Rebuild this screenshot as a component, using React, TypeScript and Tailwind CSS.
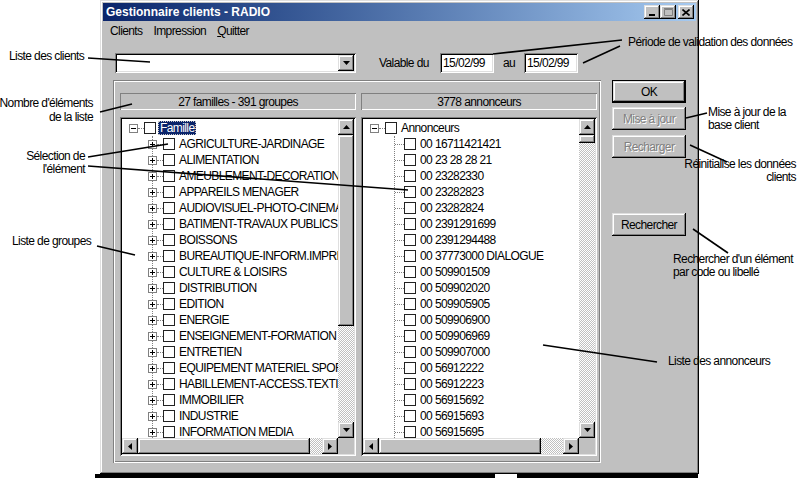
import React from 'react';

const RAISED =
  'bg-[#c0c0c0] shadow-[inset_-1px_-1px_#000,inset_1px_1px_#dfdfdf,inset_-2px_-2px_#808080,inset_2px_2px_#fff]';
const SUNKEN =
  'shadow-[inset_1px_1px_#808080,inset_-1px_-1px_#fff,inset_2px_2px_#000,inset_-2px_-2px_#dfdfdf]';
const ETCHED =
  'shadow-[inset_1px_1px_#808080,inset_-1px_-1px_#fff,inset_2px_2px_#fff,inset_-2px_-2px_#808080]';
const CHECKER =
  'bg-[image:repeating-conic-gradient(#c0c0c0_0_25%,#fff_0_50%)] bg-[length:2px_2px]';
const DISABLED = 'text-[#808080] [text-shadow:1px_1px_0_#fff]';

type Dir = 'up' | 'down' | 'left' | 'right';

const Tri = ({ dir }: { dir: Dir }) => {
  const vertical = dir === 'up' || dir === 'down';
  const d = {
    up: 'M3.5 0L7 4H0z',
    down: 'M0 0h7L3.5 4z',
    left: 'M4 0v7L0 3.5z',
    right: 'M0 0l4 3.5L0 7z',
  }[dir];
  return (
    <svg width={vertical ? 7 : 4} height={vertical ? 4 : 7} viewBox={vertical ? '0 0 7 4' : '0 0 4 7'}>
      <path d={d} fill="#000" />
    </svg>
  );
};

const ScrollBtn = ({ dir }: { dir: Dir }) => (
  <div className={`flex h-4 w-4 shrink-0 items-center justify-center ${RAISED}`}>
    <Tri dir={dir} />
  </div>
);

const VScroll = ({ thumb }: { thumb: string }) => (
  <div className="flex h-full w-4 flex-col">
    <ScrollBtn dir="up" />
    <div className={`w-4 shrink-0 ${RAISED} ${thumb}`} />
    <div className={`flex-1 ${CHECKER}`} />
    <ScrollBtn dir="down" />
  </div>
);

const HScroll = ({ thumb }: { thumb: string }) => (
  <div className="flex h-4 w-full">
    <ScrollBtn dir="left" />
    <div className={`h-4 shrink-0 ${RAISED} ${thumb}`} />
    <div className={`flex-1 ${CHECKER}`} />
    <ScrollBtn dir="right" />
  </div>
);

const Expander = ({ open }: { open?: boolean }) => (
  <span className="flex h-[9px] w-[9px] shrink-0 items-center justify-center border border-[#808080] bg-white">
    <svg width="7" height="7" viewBox="0 0 7 7">
      <path d={open ? 'M1 3.5h5' : 'M1 3.5h5M3.5 1v5'} stroke="#000" strokeWidth="1" />
    </svg>
  </span>
);

const Check = () => <span className="h-3 w-3 shrink-0 border border-[#222] bg-white" />;

const Dots = ({ w }: { w: string }) => (
  <span className={`shrink-0 border-t border-dotted border-[#808080] ${w}`} />
);

const TreePane = ({
  title,
  vThumb,
  hThumb,
  children,
}: {
  title: string;
  vThumb: string;
  hThumb: string;
  children: React.ReactNode;
}) => (
  <div className="flex w-[236px] flex-col">
    <div className="flex h-[17px] items-center justify-center shadow-[inset_1px_1px_#808080,inset_-1px_-1px_#fff]">
      {title}
    </div>
    <div className={`mt-[7px] h-[339px] bg-white p-[2px] ${SUNKEN}`}>
      <div className="grid h-full grid-cols-[minmax(0,1fr)_16px] grid-rows-[minmax(0,1fr)_16px]">
        <div className="overflow-hidden whitespace-nowrap bg-white pt-[1px]">{children}</div>
        <VScroll thumb={vThumb} />
        <HScroll thumb={hThumb} />
        <div className="bg-[#c0c0c0]" />
      </div>
    </div>
  </div>
);

const familles = [
  'AGRICULTURE-JARDINAGE',
  'ALIMENTATION',
  'AMEUBLEMENT-DECORATION',
  'APPAREILS MENAGER',
  'AUDIOVISUEL-PHOTO-CINEMA',
  'BATIMENT-TRAVAUX PUBLICS',
  'BOISSONS',
  'BUREAUTIQUE-INFORM.IMPRIMERIE',
  'CULTURE & LOISIRS',
  'DISTRIBUTION',
  'EDITION',
  'ENERGIE',
  'ENSEIGNEMENT-FORMATION',
  'ENTRETIEN',
  'EQUIPEMENT MATERIEL SPORT',
  'HABILLEMENT-ACCESS.TEXTILE',
  'IMMOBILIER',
  'INDUSTRIE',
  'INFORMATION MEDIA',
];

const annonceurs = [
  '00 16711421421',
  '00 23 28 28 21',
  '00 23282330',
  '00 23282823',
  '00 23282824',
  '00 2391291699',
  '00 2391294488',
  '00 37773000 DIALOGUE',
  '00 509901509',
  '00 509902020',
  '00 509905905',
  '00 509906900',
  '00 509906969',
  '00 509907000',
  '00 56912222',
  '00 56912223',
  '00 56915692',
  '00 56915693',
  '00 56915695',
];

const Button = ({ label, disabled, def }: { label: string; disabled?: boolean; def?: boolean }) =>
  def ? (
    <div className="h-[23px] border border-black">
      <div className={`flex h-full items-center justify-center ${RAISED}`}>{label}</div>
    </div>
  ) : (
    <div className={`flex h-[23px] items-center justify-center ${RAISED} ${disabled ? DISABLED : ''}`}>
      {label}
    </div>
  );

const Note = ({ className, lines }: { className: string; lines: string[] }) => (
  <div className={`absolute whitespace-nowrap leading-[13px] ${className}`}>
    {lines.map((l) => (
      <div key={l}>{l}</div>
    ))}
  </div>
);

export default function App() {
  return (
    <div className="relative h-[478px] w-[800px] overflow-hidden bg-white font-['Liberation_Sans',Arial,sans-serif] text-[12px] tracking-[-0.6px] text-black">
      {/* Window */}
      <div className={`ml-[100px] flex h-[474px] w-[599px] flex-col p-[3px] ${RAISED}`}>
        {/* Title bar */}
        <div className="flex h-[18px] items-center bg-linear-to-r from-[#0a246a] to-[#a6caf0] pl-[3px] pr-[2px]">
          <span className="font-bold tracking-normal text-white">Gestionnaire clients - RADIO</span>
          <div className="ml-auto flex">
            <div className={`flex h-[14px] w-4 items-end justify-center pb-[3px] ${RAISED}`}>
              <svg width="8" height="2" viewBox="0 0 8 2">
                <rect x="1" y="0" width="6" height="2" fill="#000" />
              </svg>
            </div>
            <div className={`flex h-[14px] w-4 items-center justify-center ${RAISED}`}>
              <svg width="9" height="8" viewBox="0 0 9 8">
                <path d="M0.5 1.5h8v6h-8z" fill="none" stroke="#808080" />
                <path d="M0 0.5h9" stroke="#808080" />
              </svg>
            </div>
            <div className={`ml-[2px] flex h-[14px] w-4 items-center justify-center ${RAISED}`}>
              <svg width="8" height="7" viewBox="0 0 8 7">
                <path d="M0.5 0.5l7 6M7.5 0.5l-7 6" stroke="#000" strokeWidth="1.6" />
              </svg>
            </div>
          </div>
        </div>

        {/* Menu */}
        <div className="flex h-5 items-center gap-[11px] pl-[7px]">
          <span>Clients</span>
          <span>Impression</span>
          <span>
            <span className="underline">Q</span>uitter
          </span>
        </div>

        {/* Client + dates */}
        <div className="mt-3 flex h-5 items-center pl-3">
          <div className={`flex h-5 w-[241px] justify-end bg-white p-[2px] ${SUNKEN}`}>
            <ScrollBtn dir="down" />
          </div>
          <span className="ml-[23px] w-[61px]">Valable du</span>
          <div className={`flex h-5 w-[54px] items-center bg-white pl-[3px] ${SUNKEN}`}>15/02/99</div>
          <span className="ml-[9px] w-[21px]">au</span>
          <div className={`flex h-5 w-[54px] items-center bg-white pl-[3px] ${SUNKEN}`}>15/02/99</div>
        </div>

        {/* Lists + buttons */}
        <div className="mt-[7px] flex">
          <div className={`ml-[10px] flex h-[383px] w-[488px] gap-[5px] pl-[7px] pt-[13px] ${ETCHED}`}>
            <TreePane title="27 familles - 391 groupes" vThumb="h-[191px]" hThumb="w-[172px]">
              <div className="flex h-4 items-center pl-[7px]">
                <Expander open />
                <Dots w="w-[6px]" />
                <Check />
                <span className="ml-[2px] border border-dotted border-[#c8c8c8] bg-[#0a246a] px-[1px] leading-[12px] text-white">
                  Famille
                </span>
              </div>
              <div className="ml-[30px] border-l border-dotted border-[#808080]">
                {familles.map((f) => (
                  <div key={f} className="-ml-[5px] flex h-4 items-center">
                    <Expander />
                    <Dots w="w-[6px]" />
                    <Check />
                    <span className="ml-1">{f}</span>
                  </div>
                ))}
              </div>
            </TreePane>

            <TreePane title="3778 annonceurs" vThumb="h-[8px]" hThumb="w-[162px]">
              <div className="flex h-4 items-center pl-[7px]">
                <Expander open />
                <Dots w="w-[6px]" />
                <Check />
                <span className="ml-[4px]">Annonceurs</span>
              </div>
              <div className="ml-[31px] border-l border-dotted border-[#808080]">
                {annonceurs.map((a) => (
                  <div key={a} className="flex h-4 items-center">
                    <Dots w="w-[9px]" />
                    <Check />
                    <span className="ml-1">{a}</span>
                  </div>
                ))}
              </div>
            </TreePane>
          </div>

          <div className="ml-[11px] flex w-[74px] flex-col">
            <Button label="OK" def />
            <div className="mt-1">
              <Button label="Mise à jour" disabled />
            </div>
            <div className="mt-[5px]">
              <Button label="Recharger" disabled />
            </div>
            <div className="mt-[55px]">
              <Button label="Rechercher" />
            </div>
          </div>
        </div>
      </div>

      {/* Screen edge below the window */}
      <div className="flex h-1">
        <div className="ml-[95px] w-[400px] bg-black" />
        <div className="ml-[22px] w-[181px] bg-black" />
      </div>

      {/* Callouts */}
      <Note className="left-[9px] top-[50px]" lines={['Liste des clients']} />
      <Note className="right-[707px] top-[96px] text-right leading-[14px]" lines={["Nombre d'éléments", 'de la liste']} />
      <Note className="right-[715px] top-[150px] text-right" lines={['Sélection de', "l'élément"]} />
      <Note className="left-[12px] top-[235px]" lines={['Liste de groupes']} />
      <Note className="left-[628px] top-[36px]" lines={['Période de validation des données']} />
      <Note className="left-[708px] top-[106px]" lines={['Mise à jour de la', 'base client']} />
      <Note className="right-[4px] top-[158px] text-right" lines={['Réinitialise les données', 'clients']} />
      <Note className="left-[673px] top-[253px]" lines={["Rechercher d'un élément", 'par code ou libellé']} />
      <Note className="left-[668px] top-[355px]" lines={['Liste des annonceurs']} />

      <svg className="pointer-events-none absolute left-0 top-0" width="800" height="478" viewBox="0 0 800 478">
        <g stroke="#000" strokeWidth="1.6" fill="none">
          <line x1="88" y1="58" x2="150" y2="62" />
          <line x1="100" y1="112" x2="132" y2="104" />
          <line x1="88" y1="157" x2="168" y2="144" />
          <line x1="88" y1="166" x2="408" y2="190" />
          <line x1="97" y1="246" x2="135" y2="255" />
          <line x1="493" y1="54" x2="622" y2="40" />
          <line x1="583" y1="63" x2="620" y2="46" />
          <line x1="686" y1="118" x2="707" y2="113" />
          <line x1="690" y1="145" x2="727" y2="162" />
          <line x1="693" y1="229" x2="728" y2="253" />
          <line x1="543" y1="345" x2="657" y2="362" />
        </g>
      </svg>
    </div>
  );
}
